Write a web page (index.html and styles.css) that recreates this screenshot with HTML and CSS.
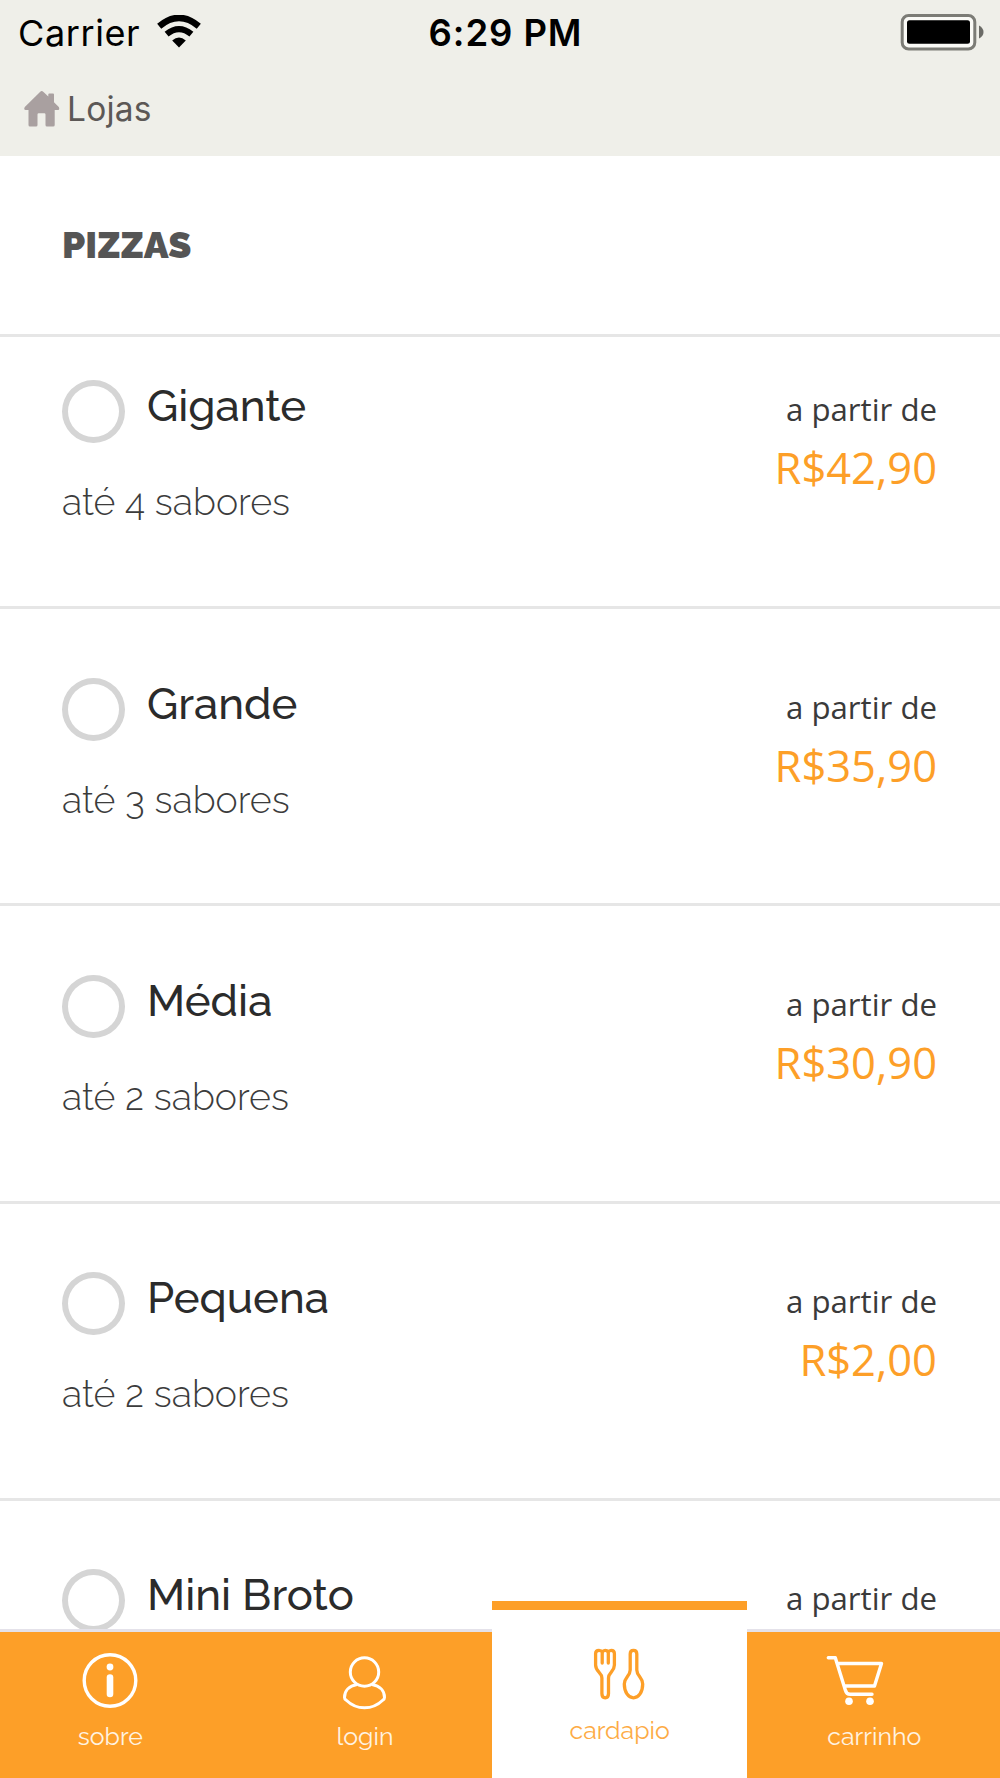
FILE: index.html
```html
<!DOCTYPE html>
<html lang="pt-BR">
<head>
<meta charset="utf-8">
<title>Pizzas</title>
<link rel="stylesheet" href="styles.css">
</head>
<body>
<div class="app">
  <header class="top">
    <div class="status">
      <div class="carrier">
        <span class="carrier-name">Carrier</span>
        <svg class="wifi" viewBox="0 0 44 33">
          <path d="M2.2 11.200Q22-5.400 41.800 11.200" fill="none" stroke="#000" stroke-width="6.4"/>
          <path d="M9.6 19.200Q22 9 34.400 19.200" fill="none" stroke="#000" stroke-width="6.2"/>
          <path d="M15.2 25.400Q22 19.500 28.8 25.400L22 32.500Z"/>
        </svg>
      </div>
      <span class="clock">6:29 PM</span>
      <svg class="battery" viewBox="0 0 84 38">
        <rect x="2.200" y="2.500" width="72.600" height="33.500" rx="6.500" fill="#fafaf6" stroke="#7c7c76" stroke-width="3"/>
        <rect x="7" y="7.200" width="63" height="23.600" rx="2.500"/>
        <path d="M79 12.5Q83.500 15 83.500 19T79 25.500Z" fill="#6b6b66"/>
      </svg>
    </div>
    <a class="back">
      <svg class="home" viewBox="0 0 36 36">
        <path d="M17.700 0Q18.500 0 19.500 1L24.300 5.500V3.600Q24.300 2.600 25.300 2.600H29Q30 2.600 30 3.600V11.200L34.800 16Q36 18.700 34 19H30.700V34Q30.700 35.500 29.200 35.500H23Q21.500 35.500 21.500 34V23.500Q21.500 22.300 20.300 22.300H14.700Q13.500 22.300 13.500 23.500V34Q13.500 35.500 12 35.500H6Q4.500 35.500 4.500 34V19H1.800Q-.700 18.600 .800 16L16 1Q17 0 17.700 0Z"/>
      </svg>
      <span class="back-label">Lojas</span>
    </a>
  </header>

  <main class="menu">
    <h1 class="title">PIZZAS</h1>
    <section class="item item-first">
      <div class="choice">
        <div class="pick"><span class="radio"></span><span class="name">Gigante</span></div>
        <p class="flavors">até 4 sabores</p>
      </div>
      <div class="cost"><span class="from">a partir de</span><span class="price">R$42,90</span></div>
    </section>
    <section class="item">
      <div class="choice">
        <div class="pick"><span class="radio"></span><span class="name">Grande</span></div>
        <p class="flavors">até 3 sabores</p>
      </div>
      <div class="cost"><span class="from">a partir de</span><span class="price">R$35,90</span></div>
    </section>
    <section class="item">
      <div class="choice">
        <div class="pick"><span class="radio"></span><span class="name">Média</span></div>
        <p class="flavors">até 2 sabores</p>
      </div>
      <div class="cost"><span class="from">a partir de</span><span class="price">R$30,90</span></div>
    </section>
    <section class="item">
      <div class="choice">
        <div class="pick"><span class="radio"></span><span class="name">Pequena</span></div>
        <p class="flavors">até 2 sabores</p>
      </div>
      <div class="cost"><span class="from">a partir de</span><span class="price">R$2,00</span></div>
    </section>
    <section class="item">
      <div class="choice">
        <div class="pick"><span class="radio"></span><span class="name">Mini Broto</span></div>
      </div>
      <div class="cost"><span class="from">a partir de</span></div>
    </section>
  </main>

  <nav class="tabs">
    <a class="tab">
      <svg class="icon" viewBox="0 0 60 60">
        <circle cx="30" cy="30.500" r="25.800" fill="none" stroke="#fff" stroke-width="3.400"/>
        <circle cx="30" cy="17" r="3.400" fill="#fff"/>
        <path d="M30 27.500V44" stroke="#fff" stroke-width="6.600" stroke-linecap="round"/>
      </svg>
      <span class="tab-label">sobre</span>
    </a>
    <a class="tab">
      <svg class="icon" viewBox="0 0 60 60" fill="none" stroke="#fff" stroke-width="3">
        <circle cx="29.500" cy="22" r="14.200"/>
        <path d="M22 34.600C14 36 9.500 41 9.500 47.500Q9.500 49 11 50Q19 57.800 29.500 57.800T48 50Q49.500 49 49.500 47.500C49.500 41 45 36 37 34.600"/>
      </svg>
      <span class="tab-label">login</span>
    </a>
    <a class="tab tab-active">
      <svg class="icon" viewBox="0 0 60 60" fill="none" stroke="#fd9f28" stroke-width="3.300" stroke-linejoin="round" stroke-linecap="round">
        <path d="M5.600 9.500Q5.600 6.300 9 6.300Q11.300 6.300 12.300 8Q13.300 6.300 15.200 6.300T18.200 8Q19.200 6.300 21.200 6.300Q24.400 6.300 24.400 9.500V21C24.400 28 18.500 28 18.500 34V49.500Q18.500 53.800 15.200 53.800T11.900 49.500V34C11.900 28 5.600 28 5.600 21Z"/>
        <path d="M12.200 9V19M18.300 9V19"/>
        <path d="M40.200 10Q40.200 6.300 43.500 6.300T46.800 10V26C46.800 32 52.700 33 52.700 40C52.700 48 48.700 53.800 43.500 53.800S34.300 48 34.300 40C34.300 33 40.200 32 40.200 26Z"/>
      </svg>
      <span class="tab-label">cardapio</span>
    </a>
    <a class="tab">
      <svg class="icon icon-cart" viewBox="0 0 60 60" fill="none" stroke="#fff" stroke-width="3.400" stroke-linecap="round" stroke-linejoin="round">
        <path d="M3.300 7.700H10.300L20.300 40Q21.500 44.300 25 44.300H47M12.500 13.500H56.500L49.500 36H19.500"/>
        <circle cx="24" cy="51.300" r="3.800" fill="#fff" stroke="none"/>
        <circle cx="45" cy="51.300" r="3.800" fill="#fff" stroke="none"/>
      </svg>
      <span class="tab-label">carrinho</span>
    </a>
  </nav>
</div>
</body>
</html>
```
FILE: styles.css
```css
* { box-sizing: border-box; }
body { margin: 0; background: #fff; }

.app {
  display: flex;
  flex-direction: column;
  width: 1000px;
  height: 1778px;
  overflow: hidden;
  font-family: Raleway, Lato, sans-serif;
}

/* status and navigation bar */
.top {
  flex: none;
  height: 156px;
  background: #efefe9;
  font-family: Inter, sans-serif;
}
.status {
  display: grid;
  grid-template-columns: 1fr auto 1fr;
  align-items: start;
  height: 64px;
  padding: 0 16px 0 18px;
  color: #000;
}
.carrier { display: flex; gap: 17px; }
.carrier-name { font-size: 36px; line-height: 66px; letter-spacing: 0.6px; }
.wifi { width: 44px; height: 33px; margin-top: 15px; }
.clock { font-size: 36.500px; font-weight: 600; line-height: 66px; letter-spacing: 0.9px; padding-left: 9px; }
.battery { width: 84px; height: 38px; margin-top: 13px; justify-self: end; }
.back { display: flex; gap: 7px; padding: 26.500px 0 0 24px; }
.home { width: 36px; height: 36px; fill: #a9a0a0; }
.back-label { margin-top: -8px; font-size: 33.500px; line-height: 52px; letter-spacing: 0.2px; color: #5c5856; }

/* product list */
.menu { flex: 1; min-height: 0; overflow: hidden; }
.title {
  margin: 0;
  height: 178px;
  padding: 63px 62px 0;
  font-size: 37.400px;
  font-weight: 900;
  line-height: 52px;
  color: #555;
}
.item {
  display: flex;
  justify-content: space-between;
  height: 297.300px;
  padding: 68.600px 63px 0 62px;
  border-top: 3px solid #e6e6e6;
}
.item-first { height: 272px; padding-top: 43px; }
.pick { display: flex; gap: 22.500px; height: 63px; }
.radio {
  width: 62.500px;
  height: 63px;
  border: 6px solid #d5d5d5;
  border-radius: 50%;
}
.name { padding-top: 1px; font-size: 43.700px; font-weight: 500; line-height: 50px; color: #2b2b2b; }
.flavors {
  margin: 34px 0 0;
  font-size: 37.500px;
  font-weight: 300;
  line-height: 50px;
  color: #3c3c3c;
}
.cost {
  display: flex;
  flex-direction: column;
  align-items: flex-end;
  padding-top: 8px;
  font-family: "Open Sans", sans-serif;
}
.from { font-size: 31.200px; line-height: 42px; color: #3a3a3a; }
.price { margin-top: 8px; font-size: 43.500px; line-height: 60px; color: #fd9f28; }

/* bottom tabs */
.tabs {
  flex: none;
  display: grid;
  grid-template-columns: repeat(4, 254.670px);
  width: 1019px;
  height: 149px;
  margin-left: -17px;
  border-top: 3px solid #e4e2ea;
  background: #fd9f28;
}
.tab {
  display: flex;
  flex-direction: column;
  align-items: center;
  padding-top: 18px;
  color: #fff3e2;
}
.tab-active {
  margin-top: -31px;
  padding-top: 34px;
  border-top: 9px solid #fd9f28;
  background: #fff;
  color: #fdab45;
}
.icon { width: 60px; height: 60px; }
.icon-cart { margin-right: 38px; }
.tab-label { margin-top: 11px; font-size: 24.900px; line-height: 32px; }
```
